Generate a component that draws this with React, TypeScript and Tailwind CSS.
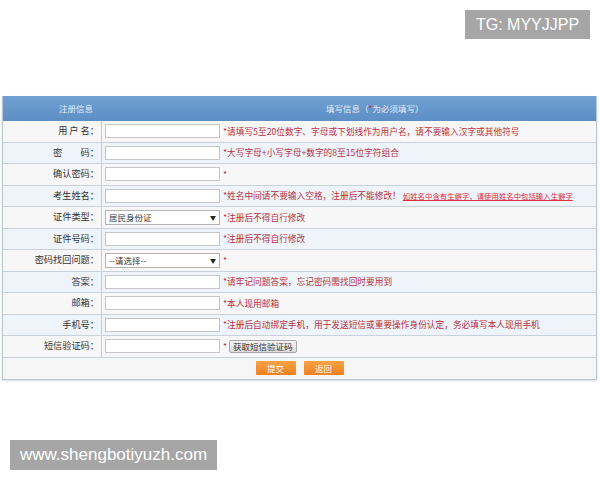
import React from "react";

const cjk = { fontFamily: '"Noto Sans CJK SC", "Noto Sans", sans-serif' };

type Row = {
  label: string;
  kind: "input" | "select";
  value?: string;
  hint: string;
  link?: string;
  button?: string;
};

const rows: Row[] = [
  { label: "用 户 名：", kind: "input", hint: "*请填写5至20位数字、字母或下划线作为用户名，请不要输入汉字或其他符号" },
  { label: "密　　码：", kind: "input", hint: "*大写字母+小写字母+数字的8至15位字符组合" },
  { label: "确认密码：", kind: "input", hint: "*" },
  { label: "考生姓名：", kind: "input", hint: "*姓名中间请不要输入空格，注册后不能修改！", link: "如姓名中含有生僻字，请使用姓名中包括输入生僻字" },
  { label: "证件类型：", kind: "select", value: "居民身份证", hint: "*注册后不得自行修改" },
  { label: "证件号码：", kind: "input", hint: "*注册后不得自行修改" },
  { label: "密码找回问题：", kind: "select", value: "--请选择--", hint: "*" },
  { label: "答案：", kind: "input", hint: "*请牢记问题答案，忘记密码需找回时要用到" },
  { label: "邮箱：", kind: "input", hint: "*本人现用邮箱" },
  { label: "手机号：", kind: "input", hint: "*注册后自动绑定手机，用于发送短信或重要操作身份认定，务必填写本人现用手机" },
  { label: "短信验证码：", kind: "input", hint: "*", button: "获取短信验证码" },
];

export default function App() {
  return (
    <div className="relative w-[600px] h-[480px] bg-white overflow-hidden" style={cjk}>
      <div className="pt-[96px] pl-[2px]">
        <div className="w-[595px] border border-[#b8c6d4] border-t-0 shadow-[0_1px_2px_rgba(0,0,0,0.15)]">
          {/* header */}
          <div className="flex h-[25px] items-center bg-gradient-to-b from-[#70a0d2] to-[#5d8fc5] text-[8.5px] text-[#e3ecf7]">
            <div className="w-[99px] pl-[56px]">注册信息</div>
            <div className="flex-1 pl-[224px]">
              填写信息（<span className="text-[#c0243a]">*</span>为必须填写）
            </div>
          </div>
          {rows.map((r, i) => (
            <div
              key={i}
              className={`flex h-[21.5px] border-b border-[#c8d2dc] ${i % 2 === 0 ? "bg-[#f8f7f7]" : "bg-[#eef4fa]"}`}
            >
              <div className="w-[99px] shrink-0 flex items-center justify-end pr-[2px] border-r border-[#c3cdd8] text-[9.2px] text-[#333]">
                {r.label}
              </div>
              <div className="flex items-center pl-[3px]">
                {r.kind === "input" ? (
                  <div className="w-[115px] h-[14px] bg-white border border-[#c6c6c6]" />
                ) : (
                  <div className="w-[115px] h-[15px] bg-white border border-[#b4b4b4] flex items-center justify-between px-[3px] text-[8.5px] text-[#333]">
                    <span>{r.value}</span>
                    <span className="text-[6px] text-[#222]">▼</span>
                  </div>
                )}
                <span className="ml-[3px] text-[8.7px] text-[#b8303c] whitespace-nowrap">{r.hint}</span>
                {r.link && (
                  <span className="ml-[2px] text-[7.4px] text-[#e02a3a] underline whitespace-nowrap">{r.link}</span>
                )}
                {r.button && (
                  <div className="ml-[2px] h-[13px] px-[3px] flex items-center bg-gradient-to-b from-[#f4f4f4] to-[#dcdcdc] border border-[#a8a8a8] rounded-[2px] text-[8.5px] text-[#333]">
                    {r.button}
                  </div>
                )}
              </div>
            </div>
          ))}
          <div className="flex h-[21.5px] items-center justify-center gap-[8px] bg-[#f6f6f6]">
            <div className="w-[40px] h-[14px] flex items-center justify-center bg-gradient-to-b from-[#f9a347] to-[#ee7f1d] text-white text-[8.5px] rounded-[1px]">
              提交
            </div>
            <div className="w-[40px] h-[14px] flex items-center justify-center bg-gradient-to-b from-[#f9a347] to-[#ee7f1d] text-white text-[8.5px] rounded-[1px]">
              返回
            </div>
          </div>
        </div>
      </div>

      <div
        className="absolute top-[10px] left-[465px] w-[125px] h-[29px] bg-[#a6a6a6] flex items-center justify-center text-white text-[16px]"
        style={{ fontFamily: '"Liberation Sans", Arial, sans-serif' }}
      >
        TG: MYYJJPP
      </div>
      <div
        className="absolute top-[440px] left-[10px] w-[207px] h-[30px] bg-[#a6a6a6] flex items-center justify-center text-white text-[17px]"
        style={{ fontFamily: '"Liberation Sans", Arial, sans-serif' }}
      >
        www.shengbotiyuzh.com
      </div>
    </div>
  );
}
